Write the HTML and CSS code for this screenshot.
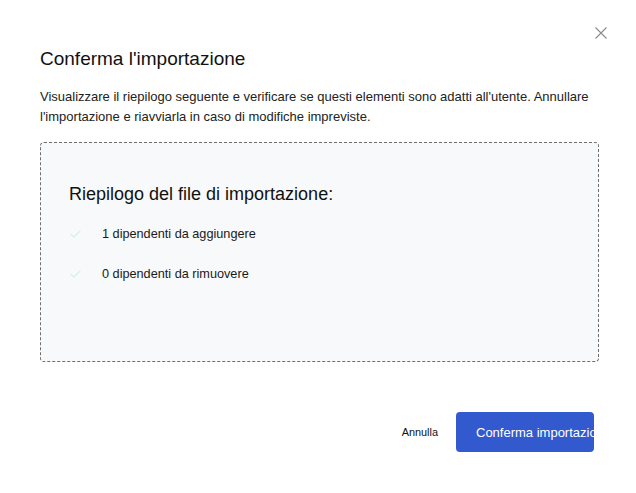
FILE: index.html
```html
<!DOCTYPE html>
<html lang="it">
<head>
<meta charset="utf-8">
<link rel="stylesheet" href="styles.css">
</head>
<body>
<div class="dialog">
  <button class="close" aria-label="Chiudi">
    <svg width="12" height="12" viewBox="0 0 12 12"><path d="M0.5 0.5 L11.5 11.5 M11.5 0.5 L0.5 11.5" stroke="#8a8a8a" stroke-width="1.1" fill="none"/></svg>
  </button>
  <h1 class="title">Conferma l'importazione</h1>
  <p class="desc">Visualizzare il riepilogo seguente e verificare se questi elementi sono adatti all'utente. Annullare l'importazione e riavviarla in caso di modifiche impreviste.</p>
  <div class="summary">
    <h2 class="summary-title">Riepilogo del file di importazione:</h2>
    <ul class="items">
      <li class="item"><svg class="check" width="11" height="8" viewBox="0 0 11 8"><path d="M0.7 4 L3.8 7 L10.3 0.7" stroke="#d3f3e6" stroke-width="1.3" fill="none"/></svg><span>1 dipendenti da aggiungere</span></li>
      <li class="item"><svg class="check" width="11" height="8" viewBox="0 0 11 8"><path d="M0.7 4 L3.8 7 L10.3 0.7" stroke="#d3f3e6" stroke-width="1.3" fill="none"/></svg><span>0 dipendenti da rimuovere</span></li>
    </ul>
  </div>
  <div class="actions">
    <button class="btn-link">Annulla</button>
    <button class="btn-primary"><span>Conferma importazione</span></button>
  </div>
</div>
</body>
</html>
```

FILE: styles.css
```css
html, body {
  margin: 0;
  padding: 0;
  background: #ffffff;
}
body {
  font-family: "Liberation Sans", Arial, sans-serif;
  color: #1a1a1a;
}
.dialog {
  position: relative;
  box-sizing: border-box;
  width: 636px;
  height: 493px;
  padding: 47px 37px 0 40px;
}
.close {
  position: absolute;
  top: 26px;
  right: 28px;
  width: 14px;
  height: 14px;
  padding: 1px;
  border: 0;
  background: none;
  line-height: 0;
}
.title {
  margin: 0;
  font-size: 19px;
  font-weight: 400;
  line-height: 24px;
  color: #111;
}
.desc {
  margin: 16px 0 0;
  font-size: 13px;
  line-height: 19.5px;
  color: #222;
}
.summary {
  box-sizing: border-box;
  margin-top: 16px;
  height: 220px;
  background: #f8f9fa;
  border: 1px dashed #6e6e6e;
  border-radius: 4px;
  padding: 39px 28px 0 28px;
}
.summary-title {
  margin: 0;
  font-size: 18px;
  font-weight: 400;
  line-height: 24px;
  color: #111;
}
.items {
  list-style: none;
  margin: 18px 0 0;
  padding: 0;
}
.item {
  display: flex;
  align-items: center;
  height: 20px;
  margin-bottom: 20px;
  font-size: 12.7px;
  color: #1a1a1a;
}
.check {
  margin-left: 1px;
  margin-right: 21px;
}
.actions {
  display: flex;
  justify-content: flex-end;
  align-items: center;
  margin-top: 50px;
  padding-right: 5px;
  gap: 18px;
}
.btn-link {
  border: 0;
  background: none;
  font-family: inherit;
  font-size: 10.9px;
  color: #111;
  padding: 0;
}
.btn-primary {
  width: 138px;
  height: 40px;
  border: 0;
  border-radius: 4px;
  background: #3259ce;
  color: #fff;
  font-family: inherit;
  font-size: 13px;
  padding: 0 0 0 20px;
  text-align: left;
  overflow: hidden;
  white-space: nowrap;
}
.btn-primary span {
  display: block;
  overflow: hidden;
}
```
